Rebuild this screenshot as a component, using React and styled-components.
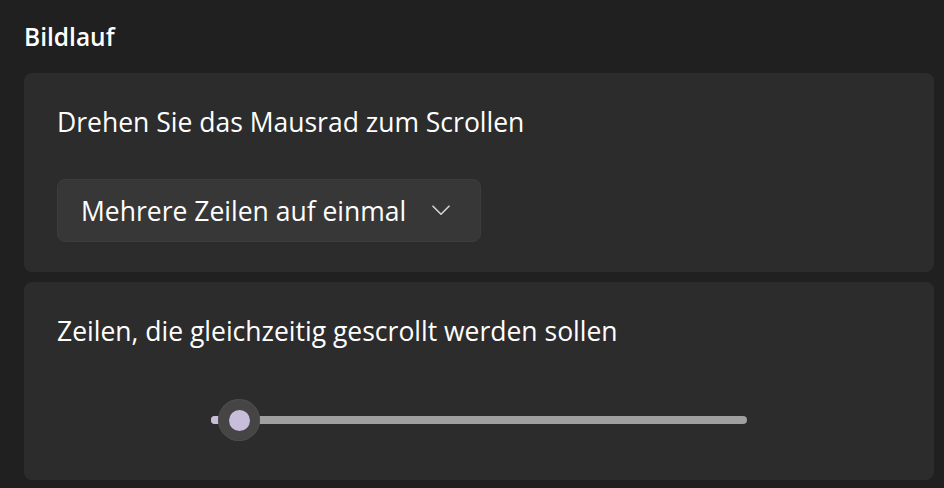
import React from "react";
import styled, { createGlobalStyle } from "styled-components";

const Global = createGlobalStyle`
  html, body { margin: 0; padding: 0; background: #202020; }
  body { font-family: "Open Sans", "Noto Sans", sans-serif; color: #ffffff; }
`;

const Page = styled.div`
  width: 944px;
  height: 488px;
  box-sizing: border-box;
  padding: 21px 10px 0 24px;
  display: flex;
  flex-direction: column;
  overflow: hidden;
`;

const Title = styled.h2`
  margin: 0 0 20px 0;
  font-size: 24.5px;
  line-height: 32px;
  font-weight: 600;
`;

const Cards = styled.div`
  display: flex;
  flex-direction: column;
  gap: 10px;
`;

const Card = styled.section`
  background: #2c2c2c;
  border-radius: 8px;
  height: ${(p) => p.$h}px;
  box-sizing: border-box;
  padding: 31px 33px 0 33px;
  display: flex;
  flex-direction: column;
`;

const Label = styled.div`
  font-size: 26.5px;
  line-height: 36px;
  color: #ffffff;
`;

const Dropdown = styled.button`
  margin-top: 39px;
  width: 424px;
  height: 63px;
  box-sizing: border-box;
  background: #373737;
  border: 1px solid #3c3c3c;
  border-radius: 8px;
  display: flex;
  align-items: center;
  justify-content: space-between;
  padding: 0 30px 0 23px;
  font-family: inherit;
  color: #ffffff;
  font-size: 26.5px;
  cursor: pointer;
`;

const SliderRow = styled.div`
  margin-top: 67px;
  display: flex;
  justify-content: center;
  margin-left: -33px;
  margin-right: -33px;
`;

const Track = styled.div`
  position: relative;
  width: 536px;
  height: 8px;
  border-radius: 4px;
  background: #a0a0a0;
`;

const Fill = styled.div`
  position: absolute;
  left: 0;
  top: 0;
  height: 8px;
  border-radius: 4px;
  background: #c8bedb;
`;

const Thumb = styled.div`
  position: absolute;
  top: 50%;
  width: 42px;
  height: 42px;
  margin-left: -21px;
  margin-top: -21px;
  border-radius: 50%;
  background: #454545;
  box-shadow: inset 0 0 0 1px #4c4c4c;
  display: flex;
  align-items: center;
  justify-content: center;
  &::after {
    content: "";
    width: 21px;
    height: 21px;
    border-radius: 50%;
    background: #c8bedb;
  }
`;

const Chevron = () => (
  <svg width="18" height="11" viewBox="0 0 18 11" fill="none">
    <path d="M1 1.2 L9 9.2 L17 1.2" stroke="#d4d4d4" strokeWidth="1.6" strokeLinecap="round" strokeLinejoin="round" />
  </svg>
);

export default function App() {
  const pos = 28;
  return (
    <>
      <Global />
      <Page>
        <Title>Bildlauf</Title>
        <Cards>
          <Card $h={199}>
            <Label>Drehen Sie das Mausrad zum Scrollen</Label>
            <Dropdown>
              <span>Mehrere Zeilen auf einmal</span>
              <Chevron />
            </Dropdown>
          </Card>
          <Card $h={198}>
            <Label>Zeilen, die gleichzeitig gescrollt werden sollen</Label>
            <SliderRow>
              <Track>
                <Fill style={{ width: pos }} />
                <Thumb style={{ left: pos }} />
              </Track>
            </SliderRow>
          </Card>
        </Cards>
      </Page>
    </>
  );
}
